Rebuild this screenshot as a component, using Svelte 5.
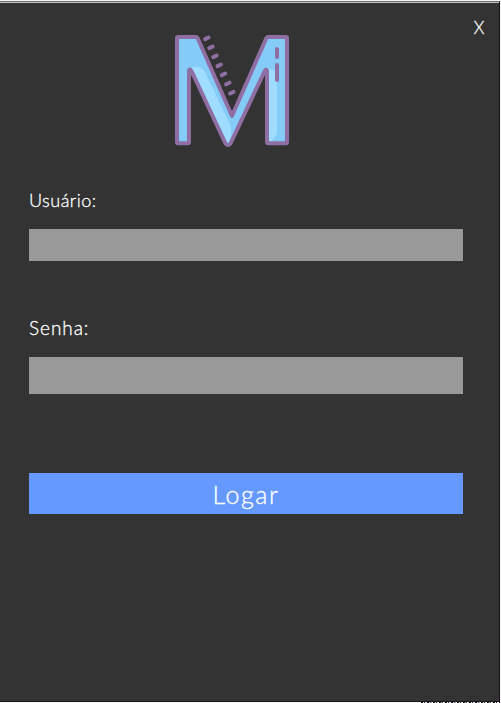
<script>
  let user = $state('');
  let password = $state('');
  const dashes = [[206.8, 38.3], [211, 47.3], [215, 56.3], [219.2, 65.3], [223.5, 74.3], [227.8, 83.5], [231.8, 92.7]];
</script>

<main>
  <form class="panel" onsubmit={(e) => e.preventDefault()}>
    <header>
      <svg class="logo" viewBox="174 34 116 114" width="116" height="114" aria-hidden="true">
        <path fill="#84cbf8" d="M177 37H197L232 116L267.500 37H287V143.200H267V70L229.500 144.500H226.500L189 70V143.200H177Z" />
        <path fill="#9fdcff" d="M191 68Q201 64 206 74L230 124Q233 133 228 144Z" />
        <path fill="#9fdcff" d="M268 69Q275 69 277 73V133Q275 140 268 142Z" />
        <path fill="none" stroke="#8f6fa3" stroke-width="4" stroke-linejoin="round" d="M178 37H195.500Q197 37 197.600 38L232 116L266.400 38Q267 37 268.500 37H286Q287 37 287 38V142Q287 143.200 286 143.200H268Q267 143.200 267 142V71Q266 68 264.700 71L230.500 143.500Q228 146.500 225.500 143.500L191.500 71Q189.500 68 189 71V142Q189 143.200 188 143.200H178Q177 143.200 177 142V38Q177 37 178 37Z" />
        <g fill="none" stroke="#8f6fa3" stroke-width="4" stroke-linecap="round">
          {#each dashes as [x, y]}
            <path d="M{x - 1.7} {y + 0.8}L{x + 1.7} {y - 0.8}" />
          {/each}
          <path d="M277 49V57M277 65V80" />
        </g>
      </svg>
      <button type="button" class="close">X</button>
    </header>
    <label class="user" for="user">Usuário:</label>
    <input id="user" class="user-field" bind:value={user} />
    <label class="password" for="password">Senha:</label>
    <input id="password" class="password-field" type="password" bind:value={password} />
    <button class="submit"><span>Logar</span></button>
  </form>
  <div class="edge"></div>
</main>

<style>
  :global(body) { background: #fff; overflow: hidden; }
  main {
    width: 501px;
    height: 703px;
    box-sizing: border-box;
    padding: 1px 1px 0 0;
    background: #f7f5f7;
    font-family: "Century Gothic", "Lato", sans-serif;
    font-weight: 300;
    -webkit-text-stroke: .3px #fff;
    overflow: hidden;
  }
  .panel {
    box-sizing: border-box;
    height: 701px;
    display: flex;
    flex-direction: column;
    padding: 0 36px 0 29px;
    background: #333;
    border-top: 1px solid #68706b;
    border-right: 1px solid #141414;
    border-bottom: 1px solid #181418;
    box-shadow: inset 0 1px #c3c5c3;
    color: #fff;
  }
  header {
    display: flex;
    align-items: flex-start;
    height: 186px;
    flex: none;
  }
  .logo { display: block; margin: 32px 0 0 145px; flex: none; }
  button, input { border: 0; padding: 0; border-radius: 0; font: inherit; color: inherit; }
  .close {
    flex: none;
    width: 20px;
    height: 24px;
    margin: 14px 0 0 179px;
    background: none;
    font-size: 17px;
    line-height: 24px;
  }
  label { display: block; height: 24px; flex: none; font-size: 18px; line-height: 24px; white-space: nowrap; }
  .user { letter-spacing: .5px; }
  .password { font-size: 19px; letter-spacing: .95px; }
  input { display: block; box-sizing: border-box; width: 434px; flex: none; background: #999; padding: 0 6px; outline: 0; font-size: 18px; }
  .user-field { height: 32px; margin: 17px 0 55px; }
  .password-field { height: 37px; margin: 17px 0 79px; }
  .submit {
    flex: none;
    display: flex;
    align-items: center;
    justify-content: center;
    width: 434px;
    height: 41px;
    background: #69f;
    font-size: 25px;
    letter-spacing: 1.6px;
  }
  .edge {
    width: 79px;
    height: 1px;
    margin-left: 421px;
    background: repeating-linear-gradient(90deg, #111 0 2px, #ddd 2px 3px, #334 3px 4px, #f5eef5 4px 6px);
  }
</style>
